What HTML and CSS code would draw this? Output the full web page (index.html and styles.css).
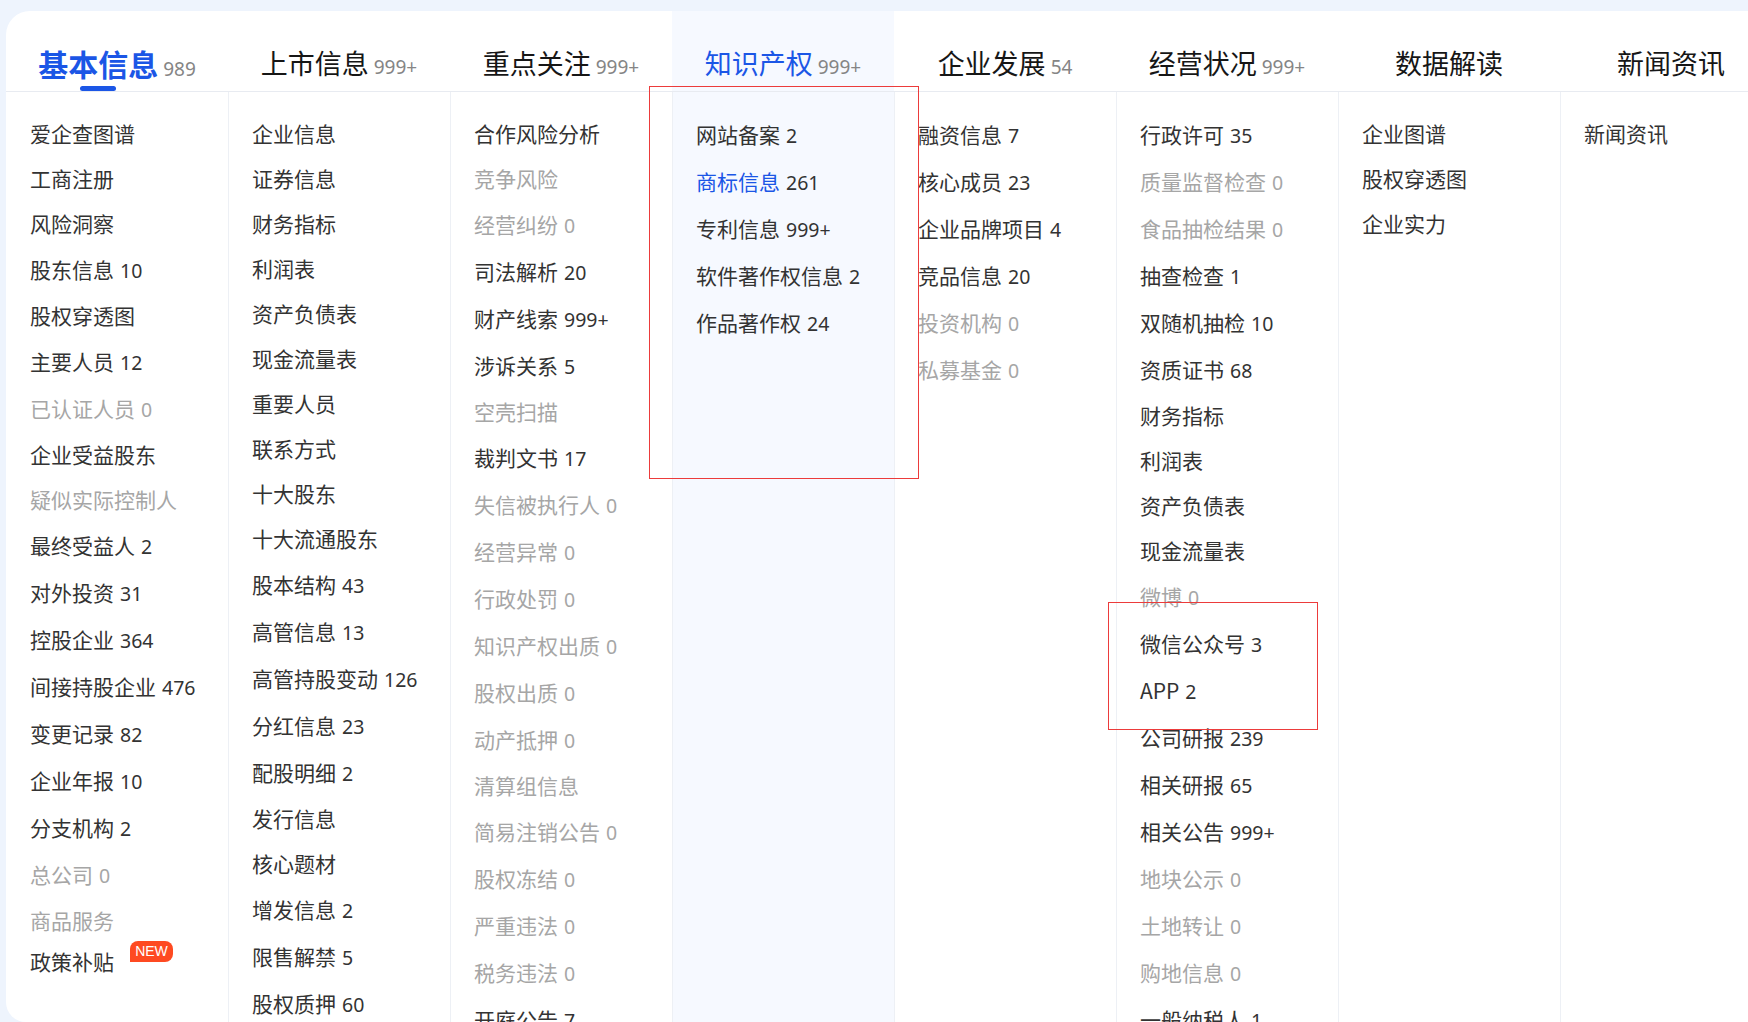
FILE: index.html
```html
<!DOCTYPE html>
<html lang="zh-CN">
<head>
<meta charset="utf-8">
<title>企业信息导航</title>
<link rel="stylesheet" href="styles.css">
</head>
<body>
<div class="card">
  <div class="tab on"><span class="tl">基本信息</span><span class="tc">989</span></div>
  <div class="tab"><span class="tl">上市信息</span><span class="tc">999+</span></div>
  <div class="tab"><span class="tl">重点关注</span><span class="tc">999+</span></div>
  <div class="tab hl"><span class="tl b">知识产权</span><span class="tc">999+</span></div>
  <div class="tab"><span class="tl">企业发展</span><span class="tc">54</span></div>
  <div class="tab"><span class="tl">经营状况</span><span class="tc">999+</span></div>
  <div class="tab"><span class="tl">数据解读</span></div>
  <div class="tab"><span class="tl">新闻资讯</span></div>

  <div class="col first">
    <div class="it">爱企查图谱</div>
    <div class="it">工商注册</div>
    <div class="it">风险洞察</div>
    <div class="it c">股东信息<span class="n">10</span></div>
    <div class="it">股权穿透图</div>
    <div class="it c">主要人员<span class="n">12</span></div>
    <div class="it c g">已认证人员<span class="n">0</span></div>
    <div class="it">企业受益股东</div>
    <div class="it g">疑似实际控制人</div>
    <div class="it c">最终受益人<span class="n">2</span></div>
    <div class="it c">对外投资<span class="n">31</span></div>
    <div class="it c">控股企业<span class="n">364</span></div>
    <div class="it c">间接持股企业<span class="n">476</span></div>
    <div class="it c">变更记录<span class="n">82</span></div>
    <div class="it c">企业年报<span class="n">10</span></div>
    <div class="it c">分支机构<span class="n">2</span></div>
    <div class="it c g">总公司<span class="n">0</span></div>
    <div class="it g">商品服务</div>
    <div class="it badged">政策补贴<span class="new">NEW</span></div>
  </div>

  <div class="col">
    <div class="it">企业信息</div>
    <div class="it">证券信息</div>
    <div class="it">财务指标</div>
    <div class="it">利润表</div>
    <div class="it">资产负债表</div>
    <div class="it">现金流量表</div>
    <div class="it">重要人员</div>
    <div class="it">联系方式</div>
    <div class="it">十大股东</div>
    <div class="it">十大流通股东</div>
    <div class="it c">股本结构<span class="n">43</span></div>
    <div class="it c">高管信息<span class="n">13</span></div>
    <div class="it c">高管持股变动<span class="n">126</span></div>
    <div class="it c">分红信息<span class="n">23</span></div>
    <div class="it c">配股明细<span class="n">2</span></div>
    <div class="it">发行信息</div>
    <div class="it">核心题材</div>
    <div class="it c">增发信息<span class="n">2</span></div>
    <div class="it c">限售解禁<span class="n">5</span></div>
    <div class="it c">股权质押<span class="n">60</span></div>
  </div>

  <div class="col">
    <div class="it">合作风险分析</div>
    <div class="it g">竞争风险</div>
    <div class="it c g">经营纠纷<span class="n">0</span></div>
    <div class="it c">司法解析<span class="n">20</span></div>
    <div class="it c">财产线索<span class="n">999+</span></div>
    <div class="it c">涉诉关系<span class="n">5</span></div>
    <div class="it g">空壳扫描</div>
    <div class="it c">裁判文书<span class="n">17</span></div>
    <div class="it c g">失信被执行人<span class="n">0</span></div>
    <div class="it c g">经营异常<span class="n">0</span></div>
    <div class="it c g">行政处罚<span class="n">0</span></div>
    <div class="it c g">知识产权出质<span class="n">0</span></div>
    <div class="it c g">股权出质<span class="n">0</span></div>
    <div class="it c g">动产抵押<span class="n">0</span></div>
    <div class="it g">清算组信息</div>
    <div class="it c g">简易注销公告<span class="n">0</span></div>
    <div class="it c g">股权冻结<span class="n">0</span></div>
    <div class="it c g">严重违法<span class="n">0</span></div>
    <div class="it c g">税务违法<span class="n">0</span></div>
    <div class="it c">开庭公告<span class="n">7</span></div>
  </div>

  <div class="col hl">
    <div class="it c">网站备案<span class="n">2</span></div>
    <div class="it c"><span class="b">商标信息</span><span class="n">261</span></div>
    <div class="it c">专利信息<span class="n">999+</span></div>
    <div class="it c">软件著作权信息<span class="n">2</span></div>
    <div class="it c">作品著作权<span class="n">24</span></div>
  </div>

  <div class="col">
    <div class="it c">融资信息<span class="n">7</span></div>
    <div class="it c">核心成员<span class="n">23</span></div>
    <div class="it c">企业品牌项目<span class="n">4</span></div>
    <div class="it c">竞品信息<span class="n">20</span></div>
    <div class="it c g">投资机构<span class="n">0</span></div>
    <div class="it c g">私募基金<span class="n">0</span></div>
  </div>

  <div class="col">
    <div class="it c">行政许可<span class="n">35</span></div>
    <div class="it c g">质量监督检查<span class="n">0</span></div>
    <div class="it c g">食品抽检结果<span class="n">0</span></div>
    <div class="it c">抽查检查<span class="n">1</span></div>
    <div class="it c">双随机抽检<span class="n">10</span></div>
    <div class="it c">资质证书<span class="n">68</span></div>
    <div class="it">财务指标</div>
    <div class="it">利润表</div>
    <div class="it">资产负债表</div>
    <div class="it">现金流量表</div>
    <div class="it c g">微博<span class="n">0</span></div>
    <div class="it c">微信公众号<span class="n">3</span></div>
    <div class="it c">APP<span class="n">2</span></div>
    <div class="it c">公司研报<span class="n">239</span></div>
    <div class="it c">相关研报<span class="n">65</span></div>
    <div class="it c">相关公告<span class="n">999+</span></div>
    <div class="it c g">地块公示<span class="n">0</span></div>
    <div class="it c g">土地转让<span class="n">0</span></div>
    <div class="it c g">购地信息<span class="n">0</span></div>
    <div class="it c">一般纳税人<span class="n">1</span></div>
  </div>

  <div class="col">
    <div class="it">企业图谱</div>
    <div class="it">股权穿透图</div>
    <div class="it">企业实力</div>
  </div>

  <div class="col">
    <div class="it">新闻资讯</div>
  </div>
</div>

<div class="mark m1"></div>
<div class="mark m2"></div>
</body>
</html>
```

FILE: styles.css
```css
* {
  box-sizing: border-box;
  margin: 0;
  padding: 0;
}

html,
body {
  width: 1748px;
  height: 1022px;
  overflow: hidden;
}

body {
  position: relative;
  background: #eef4fd;
  font-family: "Noto Sans CJK SC", "Noto Sans", sans-serif;
  color: #333333;
}

.card {
  margin: 11px 0 0 6px;
  width: 1776px;
  height: 1011px;
  background: #ffffff;
  border-radius: 24px 0 0 20px;
  overflow: hidden;
  display: grid;
  grid-template-columns: repeat(8, 222px);
  grid-template-rows: 81px 1fr;
}

/* ---------- tabs ---------- */
.tab {
  height: 81px;
  padding-top: 37px;
  border-bottom: 1px solid #e8ebf1;
  text-align: center;
  line-height: 30px;
  white-space: nowrap;
  font-size: 27px;
  color: #161616;
}

.tl {
  display: inline-block;
  position: relative;
  line-height: 30px;
}

.tab.on .tl {
  font-size: 30px;
  font-weight: 700;
  color: #1b56e6;
}

.tab.on .tl::after {
  content: "";
  position: absolute;
  left: 50%;
  margin-left: -18px;
  bottom: -13px;
  width: 36px;
  height: 5px;
  border-radius: 3px;
  background: #1b56e6;
}

.tc {
  font-family: "Noto Sans", sans-serif;
  font-size: 19px;
  color: #858585;
  margin-left: 5px;
}

.hl {
  background: #f6f9ff;
}

.b {
  color: #1b56e6;
}

/* ---------- columns ---------- */
.col {
  padding: 19px 0 0 23px;
  border-left: 1px solid #edf0f5;
}

.col.first {
  border-left: 0;
  padding-left: 24px;
}

.it {
  position: relative;
  height: 45px;
  line-height: 45px;
  font-size: 21px;
  color: #333333;
  white-space: nowrap;
}

.it.c {
  height: 47px;
  line-height: 47px;
}

.it.g {
  color: #a6a6a6;
}

.it .n {
  font-family: "Noto Sans", sans-serif;
  font-size: 19.5px;
  margin-left: 6px;
}

.it.badged {
  margin-top: -4px;
}

.new {
  position: absolute;
  left: 100px;
  top: 2px;
  width: 43px;
  height: 21px;
  line-height: 21px;
  text-align: center;
  background: #fe4a21;
  color: #ffffff;
  font-family: "Liberation Sans", Arial, sans-serif;
  font-size: 14px;
  border-radius: 8px 8px 8px 0;
}

/* ---------- annotation boxes ---------- */
.mark {
  position: absolute;
  border: 1px solid #ec3b3b;
  pointer-events: none;
}

.m1 {
  left: 649px;
  top: 86px;
  width: 270px;
  height: 393px;
}

.m2 {
  left: 1108px;
  top: 602px;
  width: 210px;
  height: 128px;
}
```
